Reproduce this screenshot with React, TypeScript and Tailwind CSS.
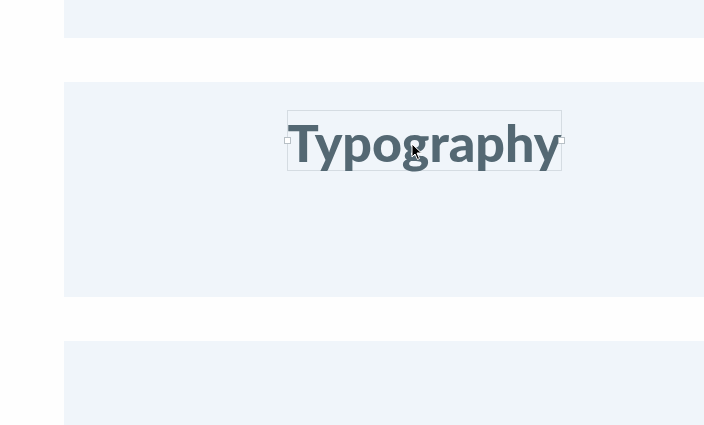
import React from 'react';

const App: React.FC = () => {
  return (
    <div className="w-[704px] h-[425px] overflow-hidden bg-[#fefefe] pl-[64px]" style={{ fontFamily: 'Lato, sans-serif' }}>
      <div className="h-[38px] bg-[#f0f5fa]"></div>
      <div className="mt-[44px] h-[215px] bg-[#f0f5fa] pt-[28px] pl-[223px]">
        <div className="relative w-[275px] h-[61px] border border-[#d5dce2] flex items-center justify-center">
          <span className="text-[52px] font-black text-[#546873] leading-none pt-[3px] whitespace-nowrap">Typography</span>
          <div className="absolute left-[-4px] top-[26px] w-[7px] h-[7px] bg-white border border-[#b8c0c6]"></div>
          <div className="absolute right-[-4px] top-[26px] w-[7px] h-[7px] bg-white border border-[#b8c0c6]"></div>
          <svg className="absolute left-[123px] top-[32px]" width="12" height="18" viewBox="0 0 12 18">
            <path d="M1 1 L1 14 L4 11 L6.5 16.5 L8.5 15.5 L6 10 L10.5 10 Z" fill="#000" stroke="#fff" strokeWidth="1" />
          </svg>
        </div>
      </div>
      <div className="mt-[44px] h-[84px] bg-[#f0f5fa]"></div>
    </div>
  );
};

export default App;
